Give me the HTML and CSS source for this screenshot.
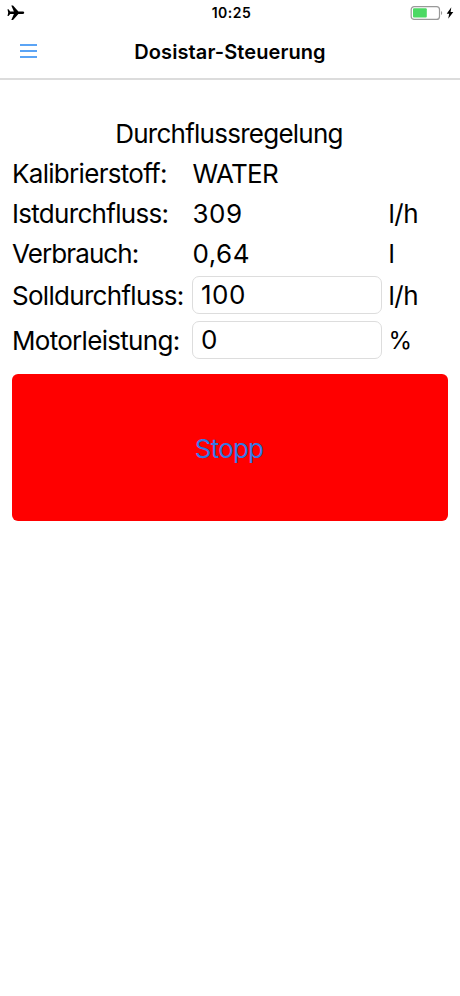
FILE: index.html
```html
<!DOCTYPE html>
<html lang="de">
<head>
  <meta charset="UTF-8" />
  <meta name="viewport" content="width=device-width, initial-scale=1.0"/>
  <title>Dosistar-Steuerung</title>
  <link rel="stylesheet" href="styles.css">
</head>
<body>
  <div class="status-bar">
    <svg class="plane" viewBox="0 0 18 16">
      <path d="M17.2 7.7c0-.8-.7-1.2-1.6-1.2h-4.2L6 .4H4.3l2.6 6.1H3.2L1.5 4.3H.5l.7 3.4-.7 3.4h1l1.7-2.2h3.7L4.3 15H6l5.4-6.1h4.2c.9 0 1.6-.4 1.6-1.2z"/>
    </svg>
    <span class="time">10:25</span>
    <div class="battery">
      <svg class="battery-icon" viewBox="0 0 33 14">
        <rect x="1.2" y=".6" width="28.3" height="12.8" rx="3" fill="none" stroke="#999" stroke-width="1.2"/>
        <rect x="3" y="2.3" width="13.8" height="9.2" rx="1" fill="#4cd964"/>
        <path d="M31 5c1.6.5 1.6 3.5 0 4z" fill="#999"/>
      </svg>
      <svg class="bolt" viewBox="0 0 8 12">
        <path d="M5.3.3L.7 6.7h2.5L2.2 11.7 7.3 5H4.6z"/>
      </svg>
    </div>
  </div>

  <header class="navbar">
    <a href="#" class="menu">
      <span></span>
      <span></span>
      <span></span>
    </a>
    <h1>Dosistar-Steuerung</h1>
  </header>

  <main class="content">
    <h2>Durchflussregelung</h2>

    <form>
      <div class="row">
        <span>Kalibrierstoff:</span>
        <span>WATER</span>
      </div>
      <div class="row">
        <span>Istdurchfluss:</span>
        <span class="number">309</span>
        <span class="unit">l/h</span>
      </div>
      <div class="row">
        <span class="usage">Verbrauch:</span>
        <span class="number">0,64</span>
        <span class="unit">l</span>
      </div>
      <div class="row input-row">
        <label for="flow">Solldurchfluss:</label>
        <input type="text" class="number" id="flow" value="100" />
        <span class="unit">l/h</span>
      </div>
      <div class="row input-row">
        <label for="power">Motorleistung:</label>
        <input type="text" class="number" id="power" value="0" />
        <span class="unit percent">%</span>
      </div>
      <button type="button">Stopp</button>
    </form>
  </main>
</body>
</html>
```

FILE: styles.css
```css
body {
  margin: 0;
  padding: 0;
  background-color: #fff;
  color: #000;
  font-family: Inter, 'Liberation Sans', sans-serif;
}

.status-bar {
  display: grid;
  grid-template-columns: 1fr auto 1fr;
  align-items: center;
  height: 26px;
  padding: 0 6px 0 7px;
}

.plane {
  width: 18px;
  height: 16px;
}

.time {
  margin-top: -2px;
  padding-left: 2px;
  font-size: 14px;
  font-weight: 600;
  letter-spacing: 0.5px;
}

.battery {
  display: flex;
  justify-content: flex-end;
  align-items: center;
  gap: 3px;
}

.battery-icon {
  width: 33px;
  height: 14px;
}

.bolt {
  width: 8px;
  height: 12px;
}

.navbar {
  display: grid;
  grid-template-columns: 60px 1fr 60px;
  align-items: center;
  height: 52px;
  border-bottom: 2px solid #dcdcdc;
}

.menu {
  display: flex;
  flex-direction: column;
  gap: 4px;
  width: 17px;
  margin: -2px 0 0 20px;
}

.menu span {
  height: 2px;
  background: #5ba4f5;
}

h1 {
  margin: 0;
  font-size: 20px;
  font-weight: 600;
  letter-spacing: 0.1px;
  text-align: center;
}

.content {
  padding: 33.5px 12px 0;
  font-size: 26px;
  line-height: 40px;
  letter-spacing: -0.7px;
}

h2 {
  margin: 0 2px 0 0;
  font-size: 26px;
  font-weight: 400;
  letter-spacing: -0.75px;
  text-align: center;
}

.row {
  display: grid;
  grid-template-columns: 180.5px 190px 1fr;
  align-items: center;
  height: 40px;
  white-space: nowrap;
}

.usage {
  letter-spacing: -0.9px;
}

.number {
  letter-spacing: 0.5px;
}

.unit {
  padding-left: 6px;
  letter-spacing: -0.5px;
}

.percent {
  font-size: 24px;
}

.input-row {
  height: 45px;
}

input {
  width: 190px;
  height: 38px;
  margin: -2px 0 0 -0.5px;
  padding: 0 8px;
  border: 1px solid #ddd;
  border-radius: 7px;
  background: #fff;
  color: #000;
  font: inherit;
  box-sizing: border-box; /* Keeps the field inside its column */
}

button {
  display: block;
  width: 100%;
  height: 147px;
  margin-top: 10.5px;
  padding: 2px 2px 0 0;
  border: none;
  border-radius: 6px;
  background-color: #f00;
  color: #3478e5;
  font: inherit;
  letter-spacing: -0.8px;
  cursor: pointer;
}
```
